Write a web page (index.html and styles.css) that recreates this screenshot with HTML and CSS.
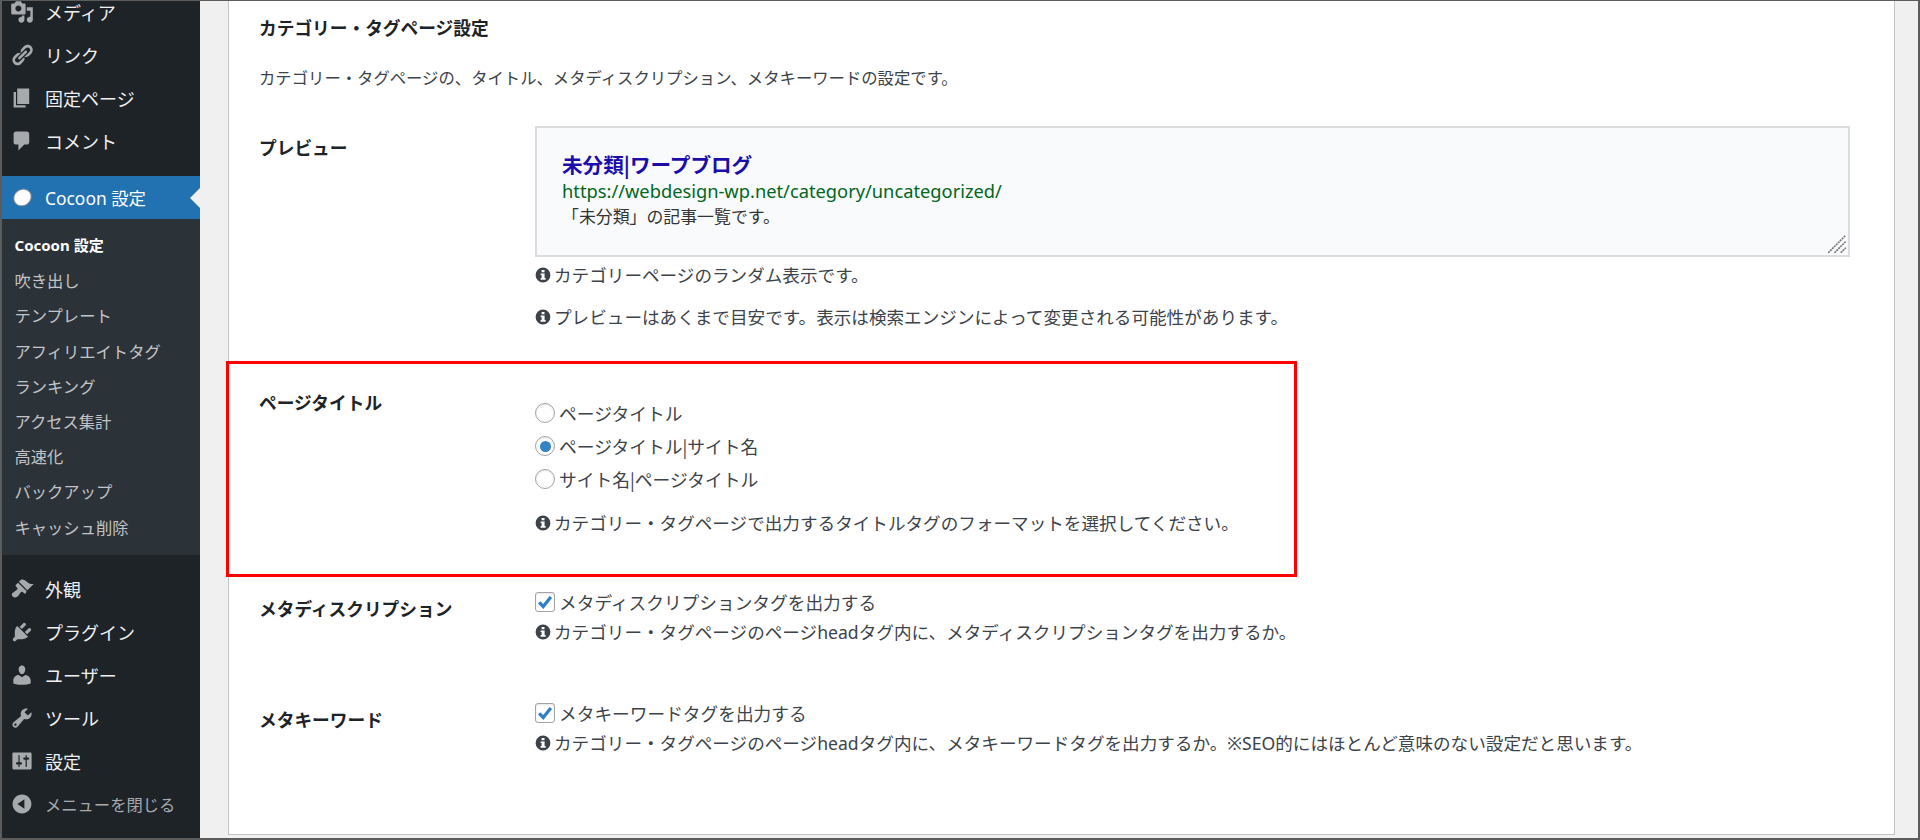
FILE: index.html
```html
<!DOCTYPE html>
<html lang="ja">
<head>
<meta charset="utf-8">
<title>Cocoon 設定</title>
<link rel="stylesheet" href="styles.css">
</head>
<body>
<svg class="defs" width="0" height="0" aria-hidden="true">
  <symbol id="info" viewBox="0 0 16 16"><path fill-rule="evenodd" d="M8 .6a7.4 7.4 0 1 1 0 14.8A7.4 7.4 0 0 1 8 .6zM6.6 2.9v2.3h2.9V2.9zM5.6 6.4v1.5h1v3.2h-1v1.6h5v-1.6h-1V6.4z"/></symbol>
</svg>
<div class="frame">
  <nav class="sidebar">
    <ul class="menu menu-top">
      <li class="item"><svg class="ico" viewBox="0 0 20 20"><path d="M13 11V4c0-.55-.45-1-1-1h-1.67L9 1H5L3.67 3H2c-.55 0-1 .45-1 1v7c0 .55.45 1 1 1h10c.55 0 1-.45 1-1zM7 4.5c1.38 0 2.5 1.12 2.5 2.5S8.38 9.5 7 9.5 4.5 8.38 4.5 7 5.62 4.5 7 4.5zM14 6h5v10.5c0 1.38-1.12 2.5-2.5 2.5S14 17.88 14 16.5s1.12-2.5 2.5-2.5c.17 0 .34.02.5.05V9h-3V6zm-4 8.05V13h2v3.5c0 1.38-1.12 2.5-2.5 2.5S7 17.88 7 16.5 8.12 14 9.5 14c.17 0 .34.02.5.05z"/></svg>メディア</li>
      <li class="item"><svg class="ico" viewBox="0 0 20 20"><path d="M17.74 2.76c1.68 1.69 1.68 4.41 0 6.1l-1.53 1.52c-1.12 1.12-2.7 1.47-4.14 1.09l2.62-2.61.76-.77.76-.76c.84-.84.84-2.2 0-3.04-.84-.85-2.2-.85-3.04 0l-.77.76-3.38 3.38c-.37-1.44-.02-3.02 1.1-4.14l1.52-1.53c1.69-1.68 4.42-1.68 6.1 0zM8.59 13.43l5.34-5.34c.42-.42.42-1.1 0-1.52-.44-.43-1.13-.39-1.53 0l-5.33 5.34c-.42.42-.42 1.1 0 1.52.44.43 1.13.39 1.52 0zm-.76 2.29l4.14-4.15c.38 1.44.03 3.02-1.09 4.14l-1.52 1.53c-1.69 1.68-4.41 1.68-6.1 0-1.68-1.68-1.68-4.42 0-6.1l1.53-1.52c1.12-1.12 2.7-1.47 4.14-1.1l-4.14 4.15c-.85.84-.85 2.2 0 3.05.84.84 2.2.84 3.04 0z"/></svg>リンク</li>
      <li class="item"><svg class="ico" viewBox="0 0 20 20"><path d="M6 15V2h10v13H6zm-1 1h8v2H3V5h2v11z"/></svg>固定ページ</li>
      <li class="item"><svg class="ico" viewBox="0 0 20 20"><path d="M5 2h9c1.1 0 2 .9 2 2v7c0 1.1-.9 2-2 2h-2l-5 5v-5H5c-1.1 0-2-.9-2-2V4c0-1.1.9-2 2-2z"/></svg>コメント</li>
    </ul>
    <div class="item item-active"><span class="cocoon-mark"></span>Cocoon 設定</div>
    <ul class="submenu">
      <li class="sub sub-current">Cocoon 設定</li>
      <li class="sub">吹き出し</li>
      <li class="sub">テンプレート</li>
      <li class="sub">アフィリエイトタグ</li>
      <li class="sub">ランキング</li>
      <li class="sub">アクセス集計</li>
      <li class="sub">高速化</li>
      <li class="sub">バックアップ</li>
      <li class="sub">キャッシュ削除</li>
    </ul>
    <ul class="menu menu-bottom">
      <li class="item"><svg class="ico" viewBox="0 0 20 20"><path d="M14.48 11.06L7.41 3.99l1.5-1.5c.5-.56 2.3-.47 3.51.32 1.21.8 1.43 1.28 2.91 2.1 1.18.64 2.45 1.26 4.45.85zm-.71.71L6.7 4.7 4.93 6.47c-.39.39-.39 1.02 0 1.41l1.06 1.06c.39.39.39 1.03 0 1.42-.6.6-1.43 1.11-2.21 1.69-.35.26-.7.53-1.01.84C1.43 13.23.99 15.08 2.25 16.32c1.25 1.25 3.11.8 4.45-.53.3-.3.58-.65.84-1.01.58-.78 1.09-1.61 1.69-2.21.39-.39 1.02-.39 1.41 0l1.06 1.06c.39.39 1.02.39 1.41 0z"/></svg>外観</li>
      <li class="item"><svg class="ico" viewBox="0 0 20 20"><path d="M13.11 4.36L9.87 7.6 8 5.73l3.24-3.24c.35-.34 1.05-.2 1.56.32.52.51.66 1.21.31 1.55zm-8 1.77l.91-1.12 9.01 9.01-1.19.84c-.71.71-2.63 1.16-3.82 1.16H6.14L4.9 17.26c-.59.59-1.54.59-2.12 0-.59-.58-.59-1.53 0-2.12l1.24-1.24v-3.88c0-1.13.4-3.19 1.09-3.89zm7.26 3.97l3.24-3.24c.34-.35 1.04-.21 1.55.31.52.51.66 1.21.31 1.55l-3.24 3.25z"/></svg>プラグイン</li>
      <li class="item"><svg class="ico" viewBox="0 0 20 20"><path d="M10 9.25c-2.27 0-2.73-3.44-2.73-3.44C7 4.02 7.82 2 9.97 2c2.16 0 2.98 2.02 2.71 3.81 0 0-.41 3.44-2.68 3.44zm0 2.57L12.72 10c2.39 0 4.52 2.33 4.52 4.53v2.49s-3.65 1.13-7.24 1.13c-3.65 0-7.24-1.13-7.24-1.13v-2.49c0-2.25 1.94-4.48 4.47-4.48z"/></svg>ユーザー</li>
      <li class="item"><svg class="ico" viewBox="0 0 20 20"><path d="M16.68 9.77c-1.34 1.34-3.3 1.67-4.95.99l-5.41 6.52c-.99.99-2.59.99-3.58 0s-.99-2.59 0-3.57l6.52-5.42c-.68-1.65-.35-3.61.99-4.95 1.28-1.28 3.12-1.62 4.72-1.06l-2.89 2.89 2.82 2.82 2.86-2.87c.53 1.58.18 3.39-1.08 4.65zM3.81 16.21c.4.39 1.04.39 1.43 0 .4-.4.4-1.04 0-1.43-.39-.4-1.03-.4-1.43 0-.39.39-.39 1.03 0 1.43z"/></svg>ツール</li>
      <li class="item"><svg class="ico" viewBox="0 0 20 20"><path d="M18 16V4c0-.55-.45-1-1-1H3c-.55 0-1 .45-1 1v12c0 .55.45 1 1 1h14c.55 0 1-.45 1-1zM8 11h1c.55 0 1 .45 1 1s-.45 1-1 1H8v1.5c0 .28-.22.5-.5.5s-.5-.22-.5-.5V13H6c-.55 0-1-.45-1-1s.45-1 1-1h1V5.5c0-.28.22-.5.5-.5s.5.22.5.5V11zm5-2h-1c-.55 0-1-.45-1-1s.45-1 1-1h1V5.5c0-.28.22-.5.5-.5s.5.22.5.5V7h1c.55 0 1 .45 1 1s-.45 1-1 1h-1v5.5c0 .28-.22.5-.5.5s-.5-.22-.5-.5V9z"/></svg>設定</li>
      <li class="item item-collapse"><svg class="ico" viewBox="0 0 20 20"><path d="M10 2.16c4.33 0 7.84 3.51 7.84 7.84s-3.51 7.84-7.84 7.84S2.16 14.33 2.16 10 5.71 2.16 10 2.16zm2 11.72V6.12L6.18 9.97z"/></svg>メニューを閉じる</li>
    </ul>
  </nav>
  <main class="content">
    <section class="card">
      <h3 class="card-title">カテゴリー・タグページ設定</h3>
      <p class="card-desc">カテゴリー・タグページの、タイトル、メタディスクリプション、メタキーワードの設定です。</p>

      <div class="row row-preview">
        <div class="label">プレビュー</div>
        <div class="field">
          <div class="preview">
            <div class="preview-title">未分類|ワープブログ</div>
            <div class="preview-url">https://webdesign-wp.net/category/uncategorized/</div>
            <div class="preview-text">「未分類」の記事一覧です。</div>
            <svg class="grip" viewBox="0 0 16 16"><path d="M1 15 15 1M6 15 15 6M11 15l4-4" stroke="#777" stroke-width="1.3" stroke-dasharray="1.6 .6" fill="none"/></svg>
          </div>
          <p class="note note-first"><svg class="info"><use href="#info"/></svg>カテゴリーページのランダム表示です。</p>
          <p class="note note-gap"><svg class="info"><use href="#info"/></svg>プレビューはあくまで目安です。表示は検索エンジンによって変更される可能性があります。</p>
        </div>
      </div>

      <div class="row row-title">
        <div class="marker"></div>
        <div class="label label-title">ページタイトル</div>
        <div class="field field-radios">
          <label class="choice choice-radio"><input class="radio" type="radio" name="fmt">ページタイトル</label>
          <label class="choice choice-radio"><input class="radio" type="radio" name="fmt" checked>ページタイトル|サイト名</label>
          <label class="choice choice-radio"><input class="radio" type="radio" name="fmt">サイト名|ページタイトル</label>
          <p class="note note-radios"><svg class="info"><use href="#info"/></svg>カテゴリー・タグページで出力するタイトルタグのフォーマットを選択してください。</p>
        </div>
      </div>

      <div class="row row-meta">
        <div class="label label-meta">メタディスクリプション</div>
        <div class="field">
          <label class="choice"><input class="check" type="checkbox" checked>メタディスクリプションタグを出力する</label>
          <p class="note note-tight"><svg class="info"><use href="#info"/></svg>カテゴリー・タグページのページheadタグ内に、メタディスクリプションタグを出力するか。</p>
        </div>
      </div>

      <div class="row row-keyword">
        <div class="label label-meta">メタキーワード</div>
        <div class="field">
          <label class="choice"><input class="check" type="checkbox" checked>メタキーワードタグを出力する</label>
          <p class="note note-tight"><svg class="info"><use href="#info"/></svg>カテゴリー・タグページのページheadタグ内に、メタキーワードタグを出力するか。※SEO的にはほとんど意味のない設定だと思います。</p>
        </div>
      </div>
    </section>
  </main>
</div>
</body>
</html>
```

FILE: styles.css
```css
* { box-sizing: border-box; }
html, body { margin: 0; padding: 0; height: 100%; overflow: hidden; }
body {
  font-family: "Noto Sans CJK JP", "Noto Sans", sans-serif;
  font-size: 17px;
  color: #3c434a;
  background: #f0f0f1;
}
.defs { position: absolute; }
.frame {
  display: flex;
  width: 1920px;
  height: 840px;
  border: 2px solid #5c5c5c;
  border-top-width: 1px;
  overflow: hidden;
}

/* sidebar */
.sidebar {
  flex: 0 0 198px;
  background: #1d2327;
  color: #f0f0f1;
  overflow: hidden;
}
.menu, .submenu { list-style: none; margin: 0; padding: 0; }
.menu-top { margin-top: -10.5px; margin-bottom: 13.5px; }
.menu-bottom { margin-top: 13px; }
.item {
  position: relative;
  display: flex;
  align-items: center;
  height: 43px;
  font-size: 18px;
}
.ico {
  flex: 0 0 24px;
  width: 24px;
  height: 24px;
  margin: 0 11px 0 8px;
  fill: #a7aaad;
}
.item-active {
  background: #2271b1;
  color: #fff;
  font-family: "Noto Sans", "Noto Sans CJK JP", sans-serif;
  font-size: 17.4px;
}
.item-active::after {
  content: "";
  position: absolute;
  right: 0;
  top: 50%;
  margin-top: -10px;
  border: 10px solid transparent;
  border-right-color: #f0f0f1;
  border-left-width: 0;
}
.cocoon-mark {
  flex: 0 0 17px;
  height: 15px;
  margin: 0 14px 0 12px;
  border-radius: 50%;
  background: #fff;
  box-shadow: 0 0 0 1px #8a9097;
  transform: rotate(-35deg);
}
.item-collapse { color: #a7aaad; font-size: 16.3px; }
.submenu { background: #2c3338; padding: 9px 0 10px; }
.sub {
  height: 35.2px;
  line-height: 35px;
  padding-left: 12.5px;
  font-size: 16.3px;
  color: #c3c4c7;
}
.sub-current {
  color: #fff;
  font-family: "Noto Sans", "Noto Sans CJK JP", sans-serif;
  font-weight: 700;
  font-size: 15px;
}

/* content */
.content { flex: 1; padding: 0 23px 3px 28px; min-width: 0; }
.card {
  height: 100%;
  background: #fff;
  border: 1px solid #c3c4c7;
  border-top: 0;
  padding: 13px 44px 0 30px;
}
.card-title {
  margin: 0;
  font-size: 17.7px;
  line-height: 26px;
  font-weight: 700;
  color: #1d2327;
}
.card-desc { margin: 24px 0 0; font-size: 16.35px; line-height: 26px; }
.row { position: relative; display: grid; grid-template-columns: 276px 1fr; }
.row-preview { margin-top: 36px; }
.row-title { margin-top: 60px; }
.row-meta { margin-top: 53px; }
.row-keyword { margin-top: 55px; }
.label { font-weight: 700; font-size: 17.7px; line-height: 26px; color: #1d2327; }
.row-preview .label { padding-top: 8px; }
.label-title { margin-top: -1px; }
.label-meta { padding-top: 6px; }
.field-radios { padding-top: 6.5px; }
.preview {
  position: relative;
  height: 131px;
  padding: 22px 25px 0;
  background: #f9fafc;
  border: 2px solid #dcdcde;
}
.preview-title { font-size: 20.6px; font-weight: 700; line-height: 28px; color: #1a0dab; }
.preview-url {
  margin-top: 1px;
  font-family: "Noto Sans", "Noto Sans CJK JP", sans-serif;
  font-size: 18.3px;
  line-height: 24px;
  color: #006621;
}
.preview-text { font-size: 16.9px; line-height: 24px; color: #333; padding-top: 1px; }
.grip { position: absolute; right: 1px; bottom: 1px; width: 20px; height: 20px; }
.note {
  display: flex;
  align-items: center;
  margin: 0;
  font-family: "Noto Sans", "Noto Sans CJK JP", sans-serif;
  font-size: 17.6px;
  line-height: 26px;
  white-space: nowrap;
}
.note-first { margin-top: 5px; }
.note-gap { margin-top: 16px; }
.note-radios { margin-top: 14.5px; }
.note-tight { margin-top: 4px; }
.info { flex: 0 0 16px; width: 16px; height: 16px; margin-right: 3px; fill: #3c434a; }
.choice { display: flex; align-items: center; font-size: 17.7px; line-height: 26px; }
.choice-radio { height: 33px; font-size: 17.75px; }
.radio, .check {
  appearance: none;
  flex: 0 0 20px;
  width: 20px;
  height: 20px;
  margin: 0 4px 0 0;
  background: #fff;
  border: 1px solid #a0a3a8;
  box-shadow: inset 0 1px 2px rgba(0,0,0,.1);
}
.radio { border-radius: 50%; position: relative; }
.radio:checked::before {
  content: "";
  display: block;
  width: 11px;
  height: 11px;
  margin: 3.5px;
  border-radius: 50%;
  background: #3582c4;
}
.check { border-radius: 3px; }
.check:checked {
  background: #fff url("data:image/svg+xml,%3Csvg xmlns='http://www.w3.org/2000/svg' viewBox='0 0 20 20'%3E%3Cpath d='M3.5 10.5 8 15l8.5-10.5' fill='none' stroke='%232f7fc8' stroke-width='3.6'/%3E%3C/svg%3E") center / 18px no-repeat;
}
.marker {
  position: absolute;
  left: -33px;
  top: -29px;
  width: 1071px;
  height: 216px;
  border: 3px solid #f00;
  pointer-events: none;
}
```
